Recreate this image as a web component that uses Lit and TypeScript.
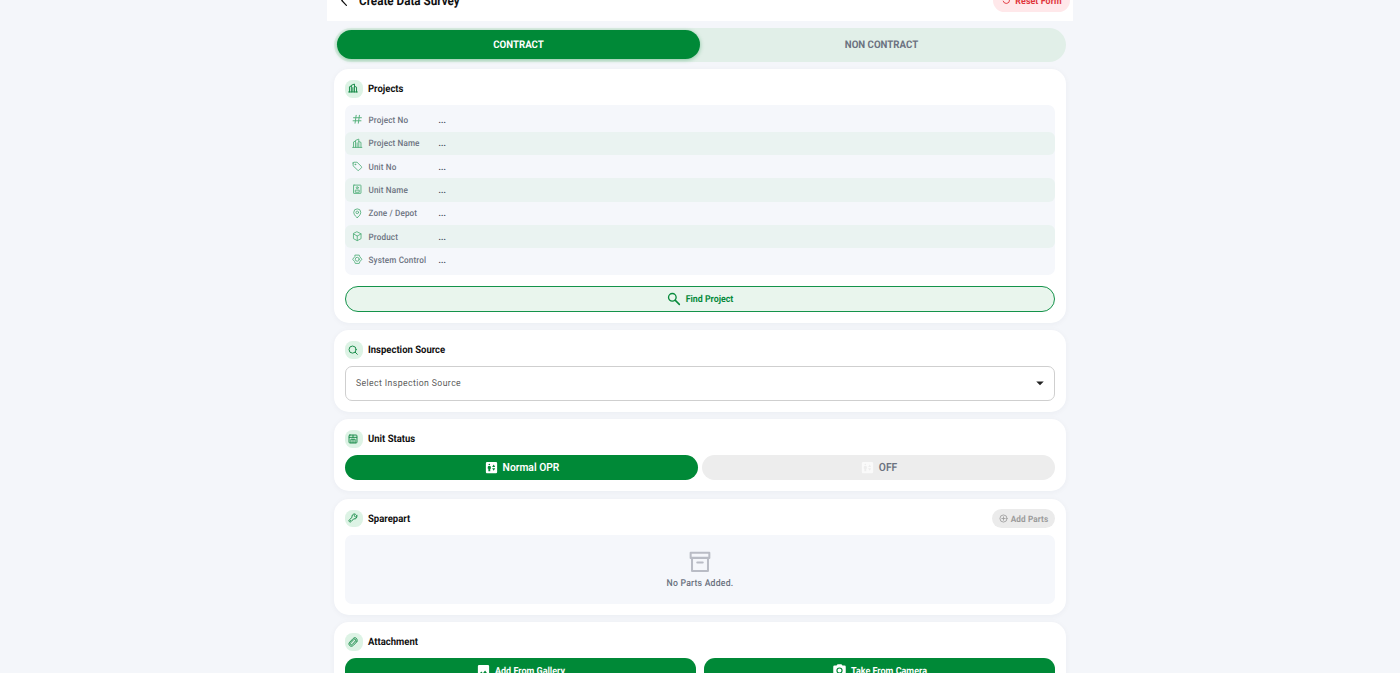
import { LitElement, html, svg, css } from "lit";
import { customElement, state } from "lit/decorators.js";

const glyphs: Record<string, unknown> = {
  back: svg`<path d="M15.500 3 7 12l8.500 9" stroke-width="2.200"/>`,
  reset: svg`<path d="M8 4.500h6a7 7 0 1 1-7 9M8 4.500l3-3M8 4.500l3 3" stroke-width="2"/>`,
  building: svg`<path d="M1.500 21.500h21M3.500 21.500V9L8 7M8 21.500V5.500L15.500 2.500v19M15.500 8l5 2v11.500M11.700 11v10"/>`,
  hash: svg`<path d="M9.500 3 7 21M17 3l-2.500 18M3.500 8.500h18M2.500 15.500h18" stroke-width="2.200"/>`,
  tag: svg`<path d="M2.500 4.500v6.500L13 21c1 .9 2 .9 3 0l5.500-5.500c.9-1 .9-2 0-3L11.500 2.800h-7c-1.200 0-2 .7-2 1.700Z"/><circle cx="7.500" cy="7.800" r="1"/>`,
  unit: svg`<rect x="3.500" y="2.500" width="17" height="19" rx="1"/><path d="M7.500 18v-4h9v4z"/><circle cx="12" cy="8.500" r="2.300"/>`,
  pin: svg`<path d="M12 22c-1.500 0-8-6.500-8-12a8 8 0 0 1 16 0c0 5.500-6.500 12-8 12Z"/><circle cx="12" cy="10" r="3"/>`,
  box: svg`<path d="m12 2 8.700 4.500v11L12 22l-8.700-4.500v-11ZM3.500 6.700 12 11.500l8.500-4.800M12 11.500V22"/>`,
  gear: svg`<path d="M7.500 2.500h9l1.500 4 4.500 5.500-4.500 5.500-1.500 4h-9l-1.500-4L1.500 12 6 6.500Z"/><circle cx="12" cy="12" r="4.500"/>`,
  search: svg`<circle cx="11" cy="11" r="8.500"/><path d="m17.300 17.300 5 5"/>`,
  find: svg`<circle cx="9.500" cy="9.500" r="5.700" stroke-width="2"/><path d="m14 14 6 6" stroke-width="2.300"/>`,
  status: svg`<rect x="2.500" y="2.500" width="19" height="19" rx="2"/><path d="M3 8h18M7 21v-8.500h10V21M12 13v8M12 3v5"/>`,
  elevator: svg`<path fill="currentColor" stroke="none" fill-rule="evenodd" d="M19 3H5a2 2 0 0 0-2 2v14c0 1.100.9 2 2 2h14a2 2 0 0 0 2-2V5a2 2 0 0 0-2-2ZM8.500 6a1.250 1.250 0 1 1 0 2.500 1.250 1.250 0 0 1 0-2.500ZM11 14h-1v4H7v-4H6v-2.500c0-1.100.9-2 2-2h1c1.100 0 2 .9 2 2V14Zm4.500 3L13 13h5l-2.500 4ZM13 11l2.500-4 2.500 4h-5Z"/>`,
  wrench: svg`<path d="M21.300 6.300 17.700 9.500l-3.200-3.200 3.300-3.600c-3.300-1.400-8.300.9-8.300 5.300 0 .8.100 1.500.4 2.200l-6.700 6.300c-1.400 1.300-1.300 3 0 4.200s3 1.200 4.200-.1l6.300-6.600c5.300 1.600 9-3.300 7.600-7.700Z"/><path d="m6 18 .5-.5"/>`,
  plus: svg`<circle cx="12" cy="12" r="9.500"/><path d="M12 7.500v9M7.500 12h9"/>`,
  archive: svg`<path d="M1.800 2h20.400v5.500H1.800ZM3.300 7.500v14.200h17.400V7.500M9 12.500h6" stroke-width="2.200"/>`,
  clip: svg`<path d="m18 9.500-7.500 8.300c-1.300 1.400-3 1.400-4.100.3-1.200-1.100-1.100-2.800.1-4.100L14 6c2.400-2.600 6.200.4 4 3.500M21 11.500l-8 8.500c-3 3-7 2.500-9 .5-2.200-2.200-2.200-5.700 0-8l8.500-9c2.300-2.300 5.600-2.300 7.500-.3 2.200 2.200 2.800 5.800 1 8.300"/>`,
  image: svg`<path fill="currentColor" stroke="none" fill-rule="evenodd" d="M21 19V5a2 2 0 0 0-2-2H5a2 2 0 0 0-2 2v14c0 1.100.9 2 2 2h14a2 2 0 0 0 2-2ZM8.500 13.500l2.500 3 3.500-4.500 4.500 6H5l3.500-4.500Z"/>`,
  camera: svg`<path fill="currentColor" stroke="none" fill-rule="evenodd" d="M20 4h-3.200L15 2H9L7.200 4H4a2 2 0 0 0-2 2v12c0 1.100.9 2 2 2h16a2 2 0 0 0 2-2V6a2 2 0 0 0-2-2Zm-8 3a5 5 0 1 1 0 10 5 5 0 0 1 0-10Zm0 1.800a3.200 3.200 0 1 0 0 6.400 3.200 3.200 0 0 0 0-6.400Z"/>`,
  caret: svg`<path fill="currentColor" stroke="none" d="m7 10 5 5 5-5z"/>`,
};

const icon = (name: string, cls = "") =>
  html`<svg class="icon ${cls}" viewBox="0 0 24 24" aria-hidden="true">${glyphs[name]}</svg>`;

@customElement("app-root")
export class AppRoot extends LitElement {
  @state() private tab = "CONTRACT";
  @state() private status = "Normal OPR";

  private rows = [
    ["hash", "Project No"],
    ["building", "Project Name"],
    ["tag", "Unit No"],
    ["unit", "Unit Name"],
    ["pin", "Zone / Depot"],
    ["box", "Product"],
    ["gear", "System Control"],
  ];

  static styles = css`
    :host { display: flex; flex-direction: column; align-items: center; justify-content: flex-start; height: 673px; overflow: hidden; background: #f4f6fa; font-family: Roboto, sans-serif; color: #111; text-rendering: geometricPrecision; }
    * { box-sizing: border-box; }
    button { font: inherit; border: 0; padding: 0; margin: 0; color: inherit; background: none; display: flex; align-items: center; justify-content: center; text-rendering: inherit; }
    h2, button span, .empty span { transform: translateY(.9px) scaleY(1.090); }
    h1, .label, .value, .toggle button span { transform: scaleY(1.100); }
    .icon { flex: none; width: 12px; height: 12px; fill: none; stroke: currentColor; stroke-width: 1.800; stroke-linecap: round; stroke-linejoin: round; }
    header { flex: none; width: 746px; height: 41px; margin-top: -20.500px; padding: 1px 3.500px 0 11px; display: flex; align-items: center; background: #fff; }
    header .icon.back { width: 13px; height: 13px; }
    h1 { flex: 1; margin: 0 0 0 8px; font-size: 11.700px; line-height: 14px; font-weight: 700; }
    .reset { width: 77px; height: 23px; gap: 4px; border-radius: 12px; background: #ffe8ea; color: #e0353b; font-size: 8.800px; font-weight: 700; letter-spacing: .1px; }
    .reset .icon { width: 11px; height: 11px; }
    main { flex: none; width: 732px; padding-top: 7.100px; display: flex; flex-direction: column; gap: 7.500px; }
    .tabs { height: 34px; padding: 2.500px 3px; display: flex; border-radius: 17px; background: #e1efe8; }
    .tabs button { flex: 1; border-radius: 15px; color: #6b7280; font-size: 9.700px; font-weight: 700; }
    .tabs button.active { background: #008937; color: #fff; box-shadow: 0 1px 4px #00893766; }
    section { padding: 11px; border-radius: 15px; background: #fff; box-shadow: 0 1px 6px #1d2a4a0b; }
    .title { height: 17.500px; display: flex; align-items: center; gap: 5.500px; }
    .title h2 { flex: 1; margin: 0; font-size: 9.500px; line-height: 12px; font-weight: 700; }
    .badge { width: 17.500px; height: 17.500px; display: flex; align-items: center; justify-content: center; border-radius: 7.500px; background: #ddf3e5; color: #168a47; }
    .badge .icon { width: 10px; height: 10px; margin: 0 1px 1px 0; stroke-width: 2.300; }
    .details { margin-top: 7.300px; padding: 3.500px 0 3.100px; border-radius: 7px; background: #f5f7fb; }
    .row { height: 23.350px; padding-left: 7px; display: flex; align-items: center; border-radius: 6px; font-size: 8.100px; font-weight: 500; letter-spacing: .15px; color: #6b7280; }
    .row:nth-child(even) { background: #eaf3f1; }
    .row .icon { width: 10.500px; height: 10.500px; color: #54b07b; margin-top: -1px; stroke-width: 2; }
    .label { width: 70px; margin-left: 6px; }
    .value { color: #374151; font-weight: 700; }
    .find { width: 100%; height: 26px; margin-top: 11px; gap: 4px; padding-right: 1px; border: 1px solid #14934a; border-radius: 13px; background: #e9f5ed; color: #078a3b; font-size: 8.800px; font-weight: 700; }
    .find .icon { width: 16px; height: 16px; }
    .select { width: 100%; height: 35px; margin-top: 7px; padding: 0 5px 0 10px; justify-content: space-between; border: 1px solid #cfcfcf; border-radius: 7px; color: #5c5c5c; font-size: 8.700px; letter-spacing: .4px; }
    .select .icon { width: 18px; height: 18px; color: #222; }
    .toggle { display: flex; gap: 4px; margin-top: 7px; }
    .toggle button { flex: 1; height: 25.500px; gap: 4px; border-radius: 13px; background: #ededed; color: #6b7280; font-size: 10.300px; font-weight: 600; }
    .toggle button .icon { width: 15px; height: 15px; color: #fafafa; }
    .toggle button.active { background: #008937; color: #fff; }
    .toggle button.active .icon { color: #fff; }
    .add { width: 63px; height: 19px; gap: 3px; border-radius: 10px; background: #ebebeb; color: #9b9b9b; font-size: 8.200px; font-weight: 700; letter-spacing: .1px; }
    .add .icon { width: 9px; height: 9px; stroke-width: 2.200; }
    .empty { height: 69px; margin-top: 7.500px; padding-top: 2px; display: flex; flex-direction: column; align-items: center; justify-content: center; gap: 4px; border-radius: 7px; background: #f5f7fb; color: #6b7280; font-size: 8.700px; line-height: 12px; font-weight: 500; letter-spacing: .2px; }
    .empty .icon { width: 22px; height: 22px; color: #b9bcc5; }
    .uploads { display: flex; gap: 8px; margin-top: 7px; }
    .uploads button { flex: 1; height: 26px; gap: 4px; border-radius: 11px; background: #008937; color: #fff; font-size: 9px; font-weight: 700; }
    .uploads .icon { width: 15px; height: 15px; }
  `;

  private heading(name: string, text: string, extra: unknown = null) {
    return html`<div class="title"><span class="badge">${icon(name)}</span><h2>${text}</h2>${extra}</div>`;
  }

  render() {
    return html`
      <header>${icon("back", "back")}<h1>Create Data Survey</h1><button class="reset">${icon("reset")}<span>Reset Form</span></button></header>
      <main>
        <div class="tabs">
          ${["CONTRACT", "NON CONTRACT"].map((t) => html`<button class=${t === this.tab ? "active" : ""} @click=${() => (this.tab = t)}><span>${t}</span></button>`)}
        </div>
        <section>
          ${this.heading("building", "Projects")}
          <div class="details">
            ${this.rows.map(([i, l]) => html`<div class="row">${icon(i)}<span class="label">${l}</span><span class="value">...</span></div>`)}
          </div>
          <button class="find">${icon("find")}<span>Find Project</span></button>
        </section>
        <section>
          ${this.heading("search", "Inspection Source")}
          <button class="select"><span>Select Inspection Source</span>${icon("caret")}</button>
        </section>
        <section>
          ${this.heading("status", "Unit Status")}
          <div class="toggle">
            ${["Normal OPR", "OFF"].map((s) => html`<button class=${s === this.status ? "active" : ""} @click=${() => (this.status = s)}>${icon("elevator")}<span>${s}</span></button>`)}
          </div>
        </section>
        <section>
          ${this.heading("wrench", "Sparepart", html`<button class="add">${icon("plus")}<span>Add Parts</span></button>`)}
          <div class="empty">${icon("archive")}<span>No Parts Added.</span></div>
        </section>
        <section>
          ${this.heading("clip", "Attachment")}
          <div class="uploads">
            <button>${icon("image")}<span>Add From Gallery</span></button>
            <button>${icon("camera")}<span>Take From Camera</span></button>
          </div>
        </section>
      </main>
    `;
  }
}
